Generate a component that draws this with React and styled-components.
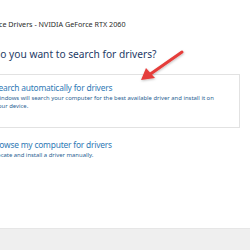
import React from 'react';
import styled, { createGlobalStyle } from 'styled-components';

const GlobalStyle = createGlobalStyle`
  html, body {
    margin: 0;
    padding: 0;
    background: #ffffff;
    overflow: hidden;
  }
  body {
    font-family: 'Noto Sans', 'Open Sans', sans-serif;
  }
`;

const Window = styled.div`
  position: relative;
  width: 250px;
  height: 250px;
  display: flex;
  flex-direction: column;
  overflow: hidden;
  background: #ffffff;
`;

const Body = styled.div`
  flex: 1;
  display: flex;
  flex-direction: column;
  padding-top: 18px;
  padding-right: 10px;
`;

const Line = styled.div`
  white-space: nowrap;
  margin-left: ${(p) => p.$cut}px;
`;

const Caption = styled(Line)`
  margin-top: 1px;
  font-size: 7.2px;
  line-height: 11px;
  color: #2b2b2b;
`;

const Heading = styled(Line)`
  margin-top: 17px;
  font-size: 10.2px;
  line-height: 14px;
  color: #1e3a66;
`;

const Option = styled.div`
  margin-left: -20px;
  padding: ${(p) => (p.$boxed ? '6px' : '10px')} 0 0 20px;
  border: ${(p) => (p.$boxed ? '1px solid #e2e2e2' : 'none')};
  margin-top: ${(p) => (p.$boxed ? '13px' : '0')};
  height: ${(p) => (p.$boxed ? '54px' : 'auto')};
  box-sizing: border-box;
`;

const OptionTitle = styled(Line)`
  font-size: 8.4px;
  letter-spacing: -0.2px;
  line-height: 13px;
  color: #2f79b5;
`;

const OptionText = styled(Line)`
  font-size: 5.9px;
  line-height: 8px;
  color: #2a5f93;
`;

const Footer = styled.div`
  height: 21px;
  background: #efefef;
  border-top: 1px solid #e6e6e6;
`;

const Arrow = () => (
  <svg
    width="60"
    height="45"
    viewBox="0 0 60 45"
    style={{ position: 'absolute', left: 135, top: 45 }}
  >
    <defs>
      <filter id="sh" x="-20%" y="-20%" width="140%" height="140%">
        <feDropShadow dx="0.5" dy="1" stdDeviation="0.8" floodColor="#000" floodOpacity="0.25" />
      </filter>
    </defs>
    <g filter="url(#sh)">
      <line x1="47" y1="7" x2="14" y2="30" stroke="#e53e3a" strokeWidth="3" strokeLinecap="round" />
      <polygon points="6,35 11,23 20,33" fill="#e53e3a" />
    </g>
  </svg>
);

export default function App() {
  return (
    <>
      <GlobalStyle />
      <Window>
        <Body>
          <Caption $cut={-1}>ce Drivers - NVIDIA GeForce RTX 2060</Caption>
          <Heading $cut={-6}>do you want to search for drivers?</Heading>
          <Option $boxed>
            <OptionTitle $cut={-7}>Search automatically for drivers</OptionTitle>
            <OptionText $cut={-7}>Windows will search your computer for the best available driver and install it on</OptionText>
            <OptionText $cut={-6}>your device.</OptionText>
          </Option>
          <Option>
            <OptionTitle $cut={-9}>Browse my computer for drivers</OptionTitle>
            <OptionText $cut={-6}>Locate and install a driver manually.</OptionText>
          </Option>
        </Body>
        <Footer />
        <Arrow />
      </Window>
    </>
  );
}
